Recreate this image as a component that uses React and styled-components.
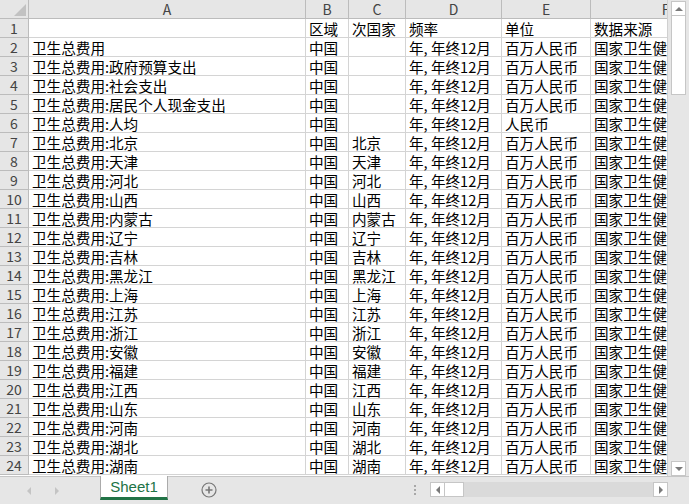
import React from 'react';
import styled, { createGlobalStyle } from 'styled-components';

const GlobalStyle = createGlobalStyle`
  html, body {
    margin: 0;
    padding: 0;
    background: #ffffff;
  }
  body {
    font-family: "Noto Sans CJK SC", "Liberation Sans", sans-serif;
    overflow: hidden;
  }
`;

const COLS = [
  { key: 'A', width: 277 },
  { key: 'B', width: 43 },
  { key: 'C', width: 57 },
  { key: 'D', width: 96 },
  { key: 'E', width: 89 },
  { key: 'F', width: 150 },
];

const provinces = [
  '北京', '天津', '河北', '山西', '内蒙古', '辽宁', '吉林', '黑龙江', '上海',
  '江苏', '浙江', '安徽', '福建', '江西', '山东', '河南', '湖北', '湖南',
];

const SOURCE = '国家卫生健康委员会';
const FREQ = '年, 年终12月';

const rows = [
  ['', '区域', '次国家', '频率', '单位', '数据来源'],
  ['卫生总费用', '中国', '', FREQ, '百万人民币', SOURCE],
  ['卫生总费用:政府预算支出', '中国', '', FREQ, '百万人民币', SOURCE],
  ['卫生总费用:社会支出', '中国', '', FREQ, '百万人民币', SOURCE],
  ['卫生总费用:居民个人现金支出', '中国', '', FREQ, '百万人民币', SOURCE],
  ['卫生总费用:人均', '中国', '', FREQ, '人民币', SOURCE],
  ...provinces.map((p) => ['卫生总费用:' + p, '中国', p, FREQ, '百万人民币', SOURCE]),
];

const Window = styled.div`
  width: 689px;
  height: 504px;
  display: flex;
  flex-direction: column;
  background: #e6e6e6;
`;

const SheetArea = styled.div`
  display: flex;
  height: 476px;
`;

const Viewport = styled.div`
  width: 668px;
  overflow: hidden;
  background: #ffffff;
`;

const Grid = styled.div`
  display: grid;
  grid-template-columns: 29px ${COLS.map((c) => c.width + 'px').join(' ')};
  grid-auto-rows: 19px;
  width: max-content;
`;

const Corner = styled.div`
  position: relative;
  background: #e6e6e6;
  border-right: 1px solid #bcbcbc;
  border-bottom: 1px solid #bcbcbc;

  &::after {
    content: '';
    position: absolute;
    right: 2px;
    bottom: 2px;
    width: 0;
    height: 0;
    border-left: 12px solid transparent;
    border-bottom: 12px solid #c2c2c2;
  }
`;

const ColHead = styled.div`
  background: #e6e6e6;
  border-right: 1px solid #bcbcbc;
  border-bottom: 1px solid #bcbcbc;
  color: #444444;
  font-size: 14px;
  line-height: 18px;
  text-align: center;
  overflow: hidden;
  white-space: nowrap;
`;

const RowHead = styled.div`
  background: #e6e6e6;
  border-right: 1px solid #bcbcbc;
  border-bottom: 1px solid #bcbcbc;
  color: #444444;
  font-size: 14px;
  line-height: 19px;
  text-align: center;
`;

const Cell = styled.div`
  border-right: 1px solid #d4d4d4;
  border-bottom: 1px solid #d4d4d4;
  padding-left: 3px;
  font-size: 14.6px;
  line-height: 19px;
  color: #000000;
  white-space: nowrap;
  overflow: ${({ $last }) => ($last ? 'hidden' : 'visible')};
`;

const VScroll = styled.div`
  width: 21px;
  display: flex;
  flex-direction: column;
  align-items: center;
  background: #e6e6e6;
  border-left: 1px solid #d0d0d0;
  padding-top: 1px;
`;

const ScrollButton = styled.div`
  width: 15px;
  height: 15px;
  box-sizing: border-box;
  background: #ffffff;
  border: 1px solid #c6c6c6;
  display: flex;
  align-items: center;
  justify-content: center;
  flex-shrink: 0;
`;

const VThumb = styled.div`
  width: 15px;
  height: 79px;
  box-sizing: border-box;
  background: #ffffff;
  border: 1px solid #c6c6c6;
  border-top: none;
`;

const Spacer = styled.div`
  flex: 1;
`;

const Arrow = styled.span`
  width: 0;
  height: 0;
  ${({ $dir, $color = '#7a7a7a' }) => {
    if ($dir === 'up') return `border-left: 4px solid transparent; border-right: 4px solid transparent; border-bottom: 4px solid ${$color};`;
    if ($dir === 'down') return `border-left: 4px solid transparent; border-right: 4px solid transparent; border-top: 4px solid ${$color};`;
    if ($dir === 'left') return `border-top: 4px solid transparent; border-bottom: 4px solid transparent; border-right: 4px solid ${$color};`;
    return `border-top: 4px solid transparent; border-bottom: 4px solid transparent; border-left: 4px solid ${$color};`;
  }}
`;

const TabBar = styled.div`
  flex: 1;
  display: flex;
  align-items: stretch;
  background: #e6e6e6;
  border-top: 1px solid #c6c6c6;
`;

const NavArrows = styled.div`
  width: 100px;
  display: flex;
  align-items: center;
  justify-content: center;
  gap: 24px;
  padding-right: 14px;
  box-sizing: border-box;
`;

const Tab = styled.div`
  width: 68px;
  height: 24px;
  margin-top: -1px;
  box-sizing: border-box;
  background: #ffffff;
  border-left: 1px solid #ababab;
  border-right: 1px solid #ababab;
  border-bottom: 3px solid #217346;
  color: #217346;
  font-family: "Liberation Sans", sans-serif;
  font-size: 15px;
  line-height: 22px;
  text-align: center;
`;

const AddButton = styled.div`
  margin-left: 33px;
  display: flex;
  align-items: center;
  padding-bottom: 2px;
`;

const HScrollWrap = styled.div`
  margin-left: auto;
  display: flex;
  align-items: center;
  padding-right: 21px;
  padding-bottom: 2px;
`;

const Grip = styled.div`
  display: flex;
  flex-direction: column;
  gap: 2px;
  margin-right: 14px;

  span {
    width: 2px;
    height: 2px;
    background: #a8a8a8;
  }
`;

const HTrack = styled.div`
  width: 238px;
  height: 15px;
  display: flex;
  background: #dadada;
`;

const HThumb = styled.div`
  width: 19px;
  height: 15px;
  box-sizing: border-box;
  background: #ffffff;
  border: 1px solid #c6c6c6;
  border-left: none;
`;

export default function App() {
  return (
    <>
      <GlobalStyle />
      <Window>
        <SheetArea>
          <Viewport>
            <Grid>
              <Corner />
              {COLS.map((c) => (
                <ColHead key={c.key}>{c.key}</ColHead>
              ))}
              {rows.map((row, i) => (
                <React.Fragment key={i}>
                  <RowHead>{i + 1}</RowHead>
                  {row.map((v, j) => (
                    <Cell key={j} $last={j === row.length - 1}>
                      {v}
                    </Cell>
                  ))}
                </React.Fragment>
              ))}
            </Grid>
          </Viewport>
          <VScroll>
            <ScrollButton>
              <Arrow $dir="up" />
            </ScrollButton>
            <VThumb />
            <Spacer />
            <ScrollButton>
              <Arrow $dir="down" />
            </ScrollButton>
          </VScroll>
        </SheetArea>
        <TabBar>
          <NavArrows>
            <Arrow $dir="left" $color="#c4c4c4" />
            <Arrow $dir="right" $color="#c4c4c4" />
          </NavArrows>
          <Tab>Sheet1</Tab>
          <AddButton>
            <svg width="16" height="16" viewBox="0 0 16 16">
              <circle cx="8" cy="8" r="7" fill="none" stroke="#777" strokeWidth="1.2" />
              <path d="M8 4.5v7M4.5 8h7" stroke="#777" strokeWidth="1.6" />
            </svg>
          </AddButton>
          <HScrollWrap>
            <Grip>
              <span />
              <span />
              <span />
            </Grip>
            <HTrack>
              <ScrollButton>
                <Arrow $dir="left" />
              </ScrollButton>
              <HThumb />
              <Spacer />
              <ScrollButton>
                <Arrow $dir="right" />
              </ScrollButton>
            </HTrack>
          </HScrollWrap>
        </TabBar>
      </Window>
    </>
  );
}
